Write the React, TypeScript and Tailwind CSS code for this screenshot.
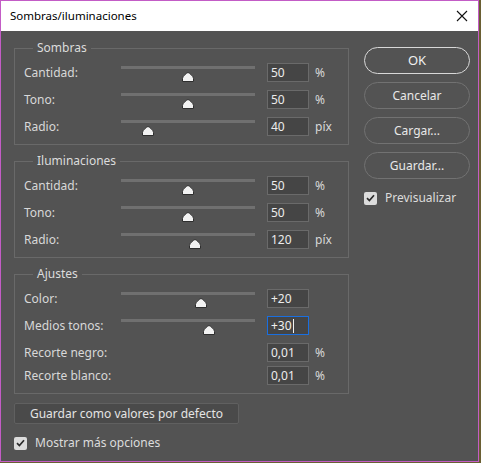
type Row = {
  label: string;
  value: string;
  unit?: string;
  // thumb position along the track, 0..1
  pos?: number;
  focused?: boolean;
};

type Group = {
  title: string;
  rows: Row[];
};

const groups: Group[] = [
  {
    title: "Sombras",
    rows: [
      { label: "Cantidad:", value: "50", unit: "%", pos: 0.5 },
      { label: "Tono:", value: "50", unit: "%", pos: 0.5 },
      { label: "Radio:", value: "40", unit: "píx", pos: 0.2 },
    ],
  },
  {
    title: "Iluminaciones",
    rows: [
      { label: "Cantidad:", value: "50", unit: "%", pos: 0.5 },
      { label: "Tono:", value: "50", unit: "%", pos: 0.5 },
      { label: "Radio:", value: "120", unit: "píx", pos: 0.55 },
    ],
  },
  {
    title: "Ajustes",
    rows: [
      { label: "Color:", value: "+20", pos: 0.6 },
      { label: "Medios tonos:", value: "+30", pos: 0.655, focused: true },
      { label: "Recorte negro:", value: "0,01", unit: "%" },
      { label: "Recorte blanco:", value: "0,01", unit: "%" },
    ],
  },
];

const font = "font-['Noto_Sans','Open_Sans',sans-serif]";

function Thumb() {
  return (
    <svg width="12" height="10" viewBox="0 0 12 10" aria-hidden="true">
      <path
        d="M6 .5C7 .5 11.5 4.3 11.5 6.3V9.5H.5V6.3C.5 4.3 5 .5 6 .5Z"
        fill="#f2f2f2"
        stroke="#2e2e2e"
        strokeWidth="1"
      />
    </svg>
  );
}

function Slider({ pos }: { pos: number }) {
  return (
    <div className="relative h-[19px] w-[134px] shrink-0">
      <div className="mt-[3px] h-[3px] w-full bg-[#707070]" />
      <div className="absolute top-[9px] -ml-[6px]" style={{ left: `${pos * 100}%` }}>
        <Thumb />
      </div>
    </div>
  );
}

function Field({ value, focused }: { value: string; focused?: boolean }) {
  return (
    <div
      className={
        focused
          ? "flex h-[19px] w-[42px] shrink-0 items-center border border-[#1a6fe0] bg-[#454545] pl-[3px] text-[12px] text-[#f0f0f0]"
          : "flex h-[19px] w-[42px] shrink-0 items-center border border-[#6a6a6a] bg-[#454545] pl-[3px] text-[12px] text-[#ececec]"
      }
    >
      {value}
      {focused && <span className="ml-px h-[14px] w-px bg-[#f0f0f0]" />}
    </div>
  );
}

function SettingRow({ row }: { row: Row }) {
  return (
    <div className="flex h-[19px] items-center">
      <span className="w-[97px] shrink-0 text-[12px] text-[#d8d8d8]">{row.label}</span>
      {row.pos !== undefined ? <Slider pos={row.pos} /> : <div className="w-[134px] shrink-0" />}
      <div className="ml-[12px]">
        <Field value={row.value} focused={row.focused} />
      </div>
      {row.unit && <span className="ml-[6px] text-[12px] text-[#d8d8d8]">{row.unit}</span>}
    </div>
  );
}

function GroupBox({ group }: { group: Group }) {
  return (
    <fieldset className="w-[335px] border border-[#696969] px-[9px] pt-[7px] pb-[8px]">
      <legend className="ml-[9px] px-[4px] text-[12px] leading-[16px] text-[#dcdcdc]">{group.title}</legend>
      <div className="flex flex-col">
        {group.rows.map((row, i) => {
          const prev = group.rows[i - 1];
          const gap = i === 0 ? "" : prev && prev.pos === undefined ? "mt-[4px]" : "mt-[8px]";
          return (
            <div key={row.label} className={gap}>
              <SettingRow row={row} />
            </div>
          );
        })}
      </div>
    </fieldset>
  );
}

function Check() {
  return (
    <div className="flex h-[13px] w-[13px] shrink-0 items-center justify-center rounded-[2px] bg-[#dcdcdc]">
      <svg width="9" height="8" viewBox="0 0 9 8" aria-hidden="true">
        <path d="M1 4.2 3.4 6.5 8 1.3" fill="none" stroke="#2b2b2b" strokeWidth="1.7" />
      </svg>
    </div>
  );
}

function PillButton({ label, primary }: { label: string; primary?: boolean }) {
  return (
    <div
      className={
        primary
          ? "flex h-[27px] w-[106px] items-center justify-center rounded-full border border-[#d8d8d8] text-[13px] text-[#f0f0f0]"
          : "flex h-[27px] w-[106px] items-center justify-center rounded-full border border-[#727272] text-[12px] text-[#e8e8e8]"
      }
    >
      {label}
    </div>
  );
}

export default function App() {
  return (
    <div className={`h-[463px] w-[481px] bg-[#6a5f33] ${font}`}>
      <div className="flex h-[462px] w-[479px] flex-col border border-[#c35cc6]">
        <div className="flex h-[30px] shrink-0 items-center justify-between bg-white pl-[9px] pr-[10px]">
          <span className="text-[11.5px] text-black">Sombras/iluminaciones</span>
          <svg width="12" height="12" viewBox="0 0 12 12" aria-hidden="true">
            <path d="M1 1 11 11M11 1 1 11" stroke="#111" strokeWidth="1.1" />
          </svg>
        </div>

        <div className="flex flex-1 bg-[#535353] pl-[13px]">
          <div className="flex flex-col pt-[9px]">
            <div className="flex flex-col gap-[8px]">
              {groups.map((g) => (
                <GroupBox key={g.title} group={g} />
              ))}
            </div>

            <div className="mt-[9px] flex h-[21px] w-[225px] items-center justify-center rounded-[2px] border border-[#606060] bg-[#4a4a4a] text-[12px] text-[#e4e4e4]">
              Guardar como valores por defecto
            </div>

            <div className="mt-[10px] flex items-center gap-[8px]">
              <Check />
              <span className="text-[12px] text-[#dcdcdc]">Mostrar más opciones</span>
            </div>
          </div>

          <div className="ml-[15px] flex flex-col gap-[8px] pt-[16px]">
            <PillButton label="OK" primary />
            <PillButton label="Cancelar" />
            <PillButton label="Cargar..." />
            <PillButton label="Guardar..." />
            <div className="mt-[2px] flex items-center gap-[8px]">
              <Check />
              <span className="text-[12px] text-[#dcdcdc]">Previsualizar</span>
            </div>
          </div>
        </div>
      </div>
    </div>
  );
}
